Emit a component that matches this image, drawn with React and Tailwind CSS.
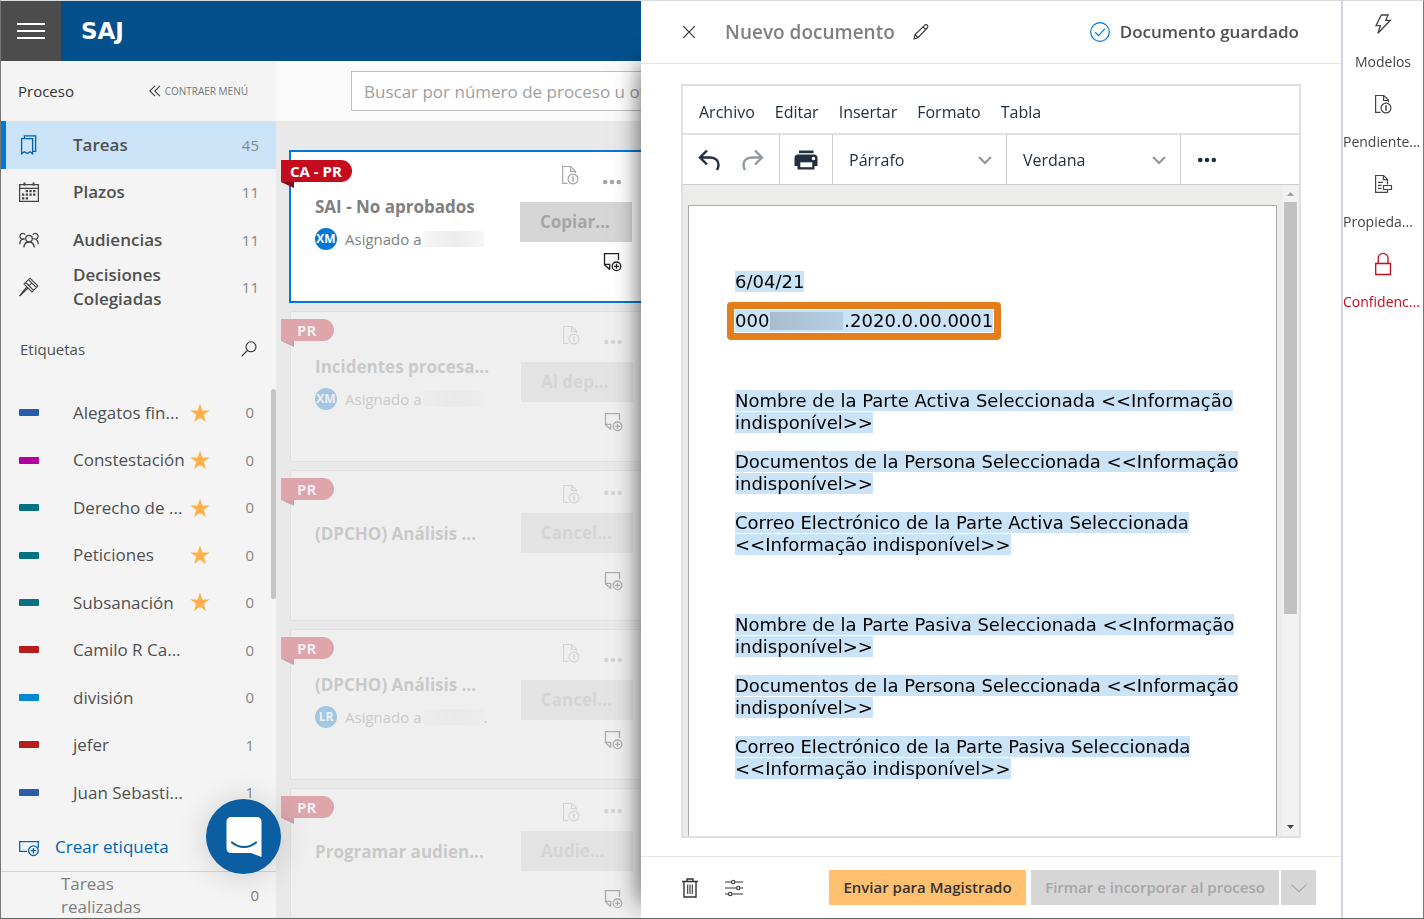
import clsx from "clsx";

const tasks = [
  { id: "tareas", label: "Tareas", count: 45, icon: BookmarkIcon, active: true },
  { id: "plazos", label: "Plazos", count: 11, icon: CalendarIcon },
  { id: "audiencias", label: "Audiencias", count: 11, icon: PeopleIcon },
  { id: "decisiones", label: "Decisiones Colegiadas", count: 11, icon: GavelIcon },
];

const tags = [
  { label: "Alegatos fin...", color: "bg-[#2b5bab]", star: true, count: 0 },
  { label: "Constestación", color: "bg-[#b4009e]", star: true, count: 0 },
  { label: "Derecho de ...", color: "bg-[#057183]", star: true, count: 0 },
  { label: "Peticiones", color: "bg-[#057183]", star: true, count: 0 },
  { label: "Subsanación", color: "bg-[#057183]", star: true, count: 0 },
  { label: "Camilo R Ca...", color: "bg-[#b81c1c]", count: 0 },
  { label: "división", color: "bg-[#0288d1]", count: 0 },
  { label: "jefer", color: "bg-[#b81c1c]", count: 1 },
  { label: "Juan Sebasti...", color: "bg-[#2b5bab]", count: 1 },
];

const cards = [
  { badge: "CA - PR", title: "SAI - No aprobados", user: "XM", action: "Copiar...", active: true },
  { badge: "PR", title: "Incidentes procesa...", user: "XM", action: "Al dep..." },
  { badge: "PR", title: "(DPCHO) Análisis ...", action: "Cancel..." },
  { badge: "PR", title: "(DPCHO) Análisis ...", user: "LR", action: "Cancel...", dot: true },
  { badge: "PR", title: "Programar audien...", action: "Audie..." },
];

const menus = ["Archivo", "Editar", "Insertar", "Formato", "Tabla"];

const paragraphs = [
  "Nombre de la Parte Activa Seleccionada <<Informação indisponível>>",
  "Documentos de la Persona Seleccionada <<Informação indisponível>>",
  "Correo Electrónico de la Parte Activa Seleccionada <<Informação indisponível>>",
  "",
  "Nombre de la Parte Pasiva Seleccionada <<Informação indisponível>>",
  "Documentos de la Persona Seleccionada <<Informação indisponível>>",
  "Correo Electrónico de la Parte Pasiva Seleccionada <<Informação indisponível>>",
];

const rail = [
  { label: "Modelos", icon: BoltIcon },
  { label: "Pendiente...", icon: DocAlertIcon, clipped: true },
  { label: "Propieda...", icon: DocPropsIcon, clipped: true },
  { label: "Confidenc...", icon: LockIcon, clipped: true, danger: true },
];

/* ---------- Icons ---------- */

function Svg({ className = "size-5", box = "0 0 20 20", width = 1.1, children }) {
  return (
    <svg
      className={clsx("shrink-0", className)}
      viewBox={box}
      fill="none"
      stroke="currentColor"
      strokeWidth={width}
      aria-hidden="true"
    >
      {children}
    </svg>
  );
}

function BookmarkIcon() {
  return (
    <Svg width={1.3}>
      <path d="M2.6 3.6h11v15.2l-2.7-2-2.8 1.7-2.8-1.7-2.7 2z" />
      <path d="M5.4 3.4V.8h11.2v15.5h-2.8" />
    </Svg>
  );
}

function CalendarIcon() {
  return (
    <Svg width={1.3}>
      <path d="M.6 2.6h18.8v16.8H.6zM.6 6.4h18.8" />
      <path strokeWidth="2" d="M5.5.4v3.2M14.5.4v3.2" />
      <path
        strokeWidth="2.2"
        strokeDasharray="2.3 1.4"
        d="M6.7 9.2h10.6M3 12.7h14.3M3 16.3h6"
      />
    </Svg>
  );
}

function PeopleIcon() {
  return (
    <Svg width={1.3}>
      <circle cx="10" cy="8.6" r="3.3" />
      <path d="M4.8 17.4c.3-3.2 2.4-5.4 5.2-5.4s4.9 2.2 5.2 5.4" />
      <path d="M6.2 4.6a2.9 2.9 0 1 0-3.6 4.3M5.8 8.7C3 8.7.9 10.7.7 14.3M2.5 8.9c.9.6 2 .6 3 .2M13.8 4.6a2.9 2.9 0 1 1 3.6 4.3M14.2 8.7c2.8 0 4.9 2 5.1 5.6" />
    </Svg>
  );
}

function GavelIcon() {
  return (
    <Svg>
      <path d="M11 1.2 18.9 9.1 13 15 5.1 7.1zM9.5 2.7l7.9 7.9M6.7 5.5l7.9 7.900M12.800 5.900 9.900 8.800" />
      <path d="M7.8 9.8.5 18.9M8.9 11 .8 19.2" />
    </Svg>
  );
}

function SearchIcon() {
  return (
    <Svg className="size-4" box="0 0 16 16">
      <circle cx="10" cy="5.8" r="5" />
      <path d="M6.4 9.5.6 15.3" />
    </Svg>
  );
}

function StarIcon() {
  return (
    <svg className="size-5 shrink-0" viewBox="0 0 20 20" fill="#ffb04a" aria-hidden="true">
      <path d="M10 .5l2.350 6.900h7.150l-5.700 4.400 2.100 7.200L10 14.800 4.100 19l2.100-7.200L.5 7.400h7.150z" />
    </svg>
  );
}

function TagAddIcon() {
  return (
    <Svg width={1.3}>
      <path d="M8 14.3H.7V4.7h18.6v6" />
      <circle cx="14.4" cy="13.7" r="4.8" />
      <path d="M14.4 11v5.4M11.7 13.7h5.4" />
    </Svg>
  );
}

function DocAlertIcon() {
  return (
    <Svg width={1.2}>
      <path d="M7.5 18.4H2.6V1.5h8.2l4.7 4.7v2M10.6 1.5v5h5" />
      <circle cx="13" cy="14" r="4.9" />
      <path strokeWidth="1.5" d="M13 11.2v5.6" />
    </Svg>
  );
}

function DocPropsIcon() {
  return (
    <Svg width={1.2}>
      <path d="M14.5 18.4H2.6V1.5h8l3.9 3.9v5.2M10.4 1.5v4.1h4.1M5 8.3h5M5 11.3h3.5M5 14.3h3.5" />
      <path d="M10.5 11.5h8v4h-8zM14.5 15.5v2.9" />
    </Svg>
  );
}

function BoltIcon() {
  return (
    <Svg width={1.3}>
      <path d="M8.3 1h6.9l-2.5 5.3h4.7L4.900 19.300l2.500-7.600H3z" />
    </Svg>
  );
}

function LockIcon() {
  return (
    <Svg className="h-6 w-5" box="0 0 20 24" width={1.3}>
      <path d="M2.7 11.5h14.8v11H2.7zM5.200 11.500V6.300a4.900 4.900 0 0 1 9.800 0v5.200" />
    </Svg>
  );
}

function NoteAddIcon() {
  return (
    <Svg width={1.3}>
      <path d="M16.5 8V1.6h-14v11.2l4.7 4.3h.5v-4.7H2.7" />
      <circle cx="14.5" cy="14.3" r="4.3" />
      <path d="M14.5 11.8v5M12 14.3h5" />
    </Svg>
  );
}

function DotsIcon({ className = "h-4 w-5" }) {
  return (
    <svg className={className} viewBox="0 0 20 16" fill="currentColor" aria-hidden="true">
      <circle cx="3.2" cy="8" r="2.3" />
      <circle cx="10" cy="8" r="2.3" />
      <circle cx="16.8" cy="8" r="2.3" />
    </svg>
  );
}

function Chevron({ className }) {
  return (
    <Svg className={className} box="0 0 14 14" width={2}>
      <path d="M1 4l6 6 6-6" />
    </Svg>
  );
}

/* ---------- Left menu ---------- */

function Sidebar() {
  return (
    <aside className="flex w-[275px] shrink-0 flex-col bg-[#f4f4f4] text-[#505050]">
      <div className="flex h-[60px] shrink-0 items-center justify-between pr-7 pl-[17px]">
        <h2 className="text-[15px] text-[#333]">Proceso</h2>
        <button className="flex items-center gap-1 text-[10px] font-medium text-[#777]">
          <Svg className="size-3 text-[#444]" box="0 0 12 12">
            <path d="M6 .8.8 6 6 11.2M11 .8 5.8 6 11 11.2" />
          </Svg>
          CONTRAER MENÚ
        </button>
      </div>

      <nav className="grid h-[190px] shrink-0 auto-rows-fr">
        {tasks.map(({ id, label, count, icon: Icon, active }) => (
          <a
            key={id}
            href={`#${id}`}
            className={clsx(
              "flex items-center pr-[17px]",
              active ? "border-l-[5px] border-[#0078d7] bg-[#cbe3f7] pl-[13px]" : "pl-[18px]"
            )}
          >
            <span className={active ? "text-[#0063b1]" : "text-[#444]"}>
              <Icon />
            </span>
            <span className="ml-[34px] w-32 text-[17px] leading-6 font-semibold">{label}</span>
            <span className="ml-auto text-[15px] text-[#858585]">{count}</span>
          </a>
        ))}
      </nav>

      <div className="flex h-[78px] shrink-0 items-center justify-between pr-[19px] pb-0.5 pl-[19px]">
        <h2 className="text-[15px] font-medium">Etiquetas</h2>
        <button aria-label="Buscar etiqueta" className="text-[#333]">
          <SearchIcon />
        </button>
      </div>

      <div className="relative min-h-0 flex-1">
        <ul className="grid h-full auto-rows-fr">
          {tags.map((tag) => (
            <li key={tag.label} className="flex items-center pr-[22px] pl-[18px]">
              <span className={clsx("h-[7px] w-5 rounded-[1px]", tag.color)} />
              <span className="ml-[34px] w-[117px] text-[17px] whitespace-nowrap">{tag.label}</span>
              {tag.star && <StarIcon />}
              <span className="ml-auto text-[15px] text-[#858585]">{tag.count}</span>
            </li>
          ))}
        </ul>
        <span className="absolute top-0 right-0 h-[210px] w-[5px] rounded-sm bg-[#c5c5c5]" />
      </div>

      <button className="flex h-14 shrink-0 items-center gap-4 border-b border-[#d6d6d6] pt-1.5 pl-[18px] text-[17px] text-[#0063b1]">
        <TagAddIcon />
        Crear etiqueta
      </button>
      <a href="#realizadas" className="flex shrink-0 items-center pr-[17px] pl-[60px] text-[#808080]">
        <span className="w-[100px] text-[17px] leading-[23px]">Tareas realizadas</span>
        <span className="ml-auto text-[15px]">0</span>
      </a>
    </aside>
  );
}

/* ---------- Task list ---------- */

function TaskCard({ badge, title, user, action, active, dot }) {
  return (
    <li
      className={clsx(
        "relative flex shrink-0 justify-between bg-white pr-6",
        active
          ? "h-[153px] border-2 border-[#0078d7] pl-6"
          : "ml-px h-[151px] border border-[#ccc] pl-6 opacity-30"
      )}
    >
      <div
        className={clsx(
          "absolute -left-[10px] flex h-[22px] items-center rounded-r-full bg-[#c50b1e] text-[15px] font-bold text-white",
          active ? "top-2 pr-[10px] pl-[9px]" : "top-[7px] pr-[18px] pl-4"
        )}
      >
        {badge}
        <svg className="absolute top-full left-0 h-1.5 w-[13px]" viewBox="0 0 13 6" aria-hidden="true">
          <path d="M0 0h13v6z" fill="#8f0612" />
        </svg>
      </div>

      <div className={user ? "pt-[43px]" : "pt-[51px]"}>
        <h3 className="text-[17px] leading-6 font-bold whitespace-nowrap text-[#808080]">{title}</h3>
        {user && (
          <div className="mt-2 flex items-center text-[15px] leading-6 text-[#808080]">
            <span className="flex size-[22px] items-center justify-center rounded-full bg-[#0078d7] text-[12px] font-bold text-white">
              {user}
            </span>
            <span className="ml-2 whitespace-nowrap">Asignado a</span>
            <span className="ml-0.5 h-4 w-[60px] bg-linear-to-r from-[#f6f6f6] via-[#ececec] to-[#f6f6f6]" />
            {dot && "."}
          </div>
        )}
      </div>

      <div className="w-28 text-[#a6a6a6]">
        <div className={clsx("flex justify-between pt-[13px] pr-2.5 pl-10", user ? "h-[50px]" : "h-[42px]")}>
          <DocAlertIcon />
          <button aria-label="Más opciones" className="mb-3 self-end">
            <DotsIcon />
          </button>
        </div>
        <button className="block h-10 w-full bg-[#d6d6d6] pl-5 text-left text-[17px] font-bold">
          {action}
        </button>
        <button
          aria-label="Agregar nota"
          className={clsx("ml-auto block pr-2.5 text-[#1f1f1f]", user ? "mt-2.5" : "mt-[18px]")}
        >
          <NoteAddIcon />
        </button>
      </div>
    </li>
  );
}

function TaskList() {
  return (
    <main className="flex min-w-0 flex-1 flex-col bg-[#e9e9e9]">
      <div className="flex h-[60px] shrink-0 items-center bg-[#fafafa] pl-[75px]">
        <input
          type="search"
          aria-label="Buscar"
          placeholder="Buscar por número de proceso u otros datos"
          className="h-10 w-[480px] border border-[#bfbfbf] bg-white px-3 text-[17px] placeholder:text-[#a0a0a0]"
        />
      </div>
      <ul className="flex min-h-0 w-[382px] flex-1 flex-col gap-2 overflow-hidden pt-[29px] pl-[13px]">
        {cards.map((card, i) => (
          <TaskCard key={i} {...card} />
        ))}
      </ul>
    </main>
  );
}

/* ---------- Editor ---------- */

function ToolbarSelect({ label, value }) {
  return (
    <div className="relative flex w-[174px] items-center border-r border-[#ccc]">
      <select
        aria-label={label}
        defaultValue={value}
        className="h-full w-full appearance-none bg-transparent px-4 text-[16px]"
      >
        <option>{value}</option>
      </select>
      <Chevron className="pointer-events-none absolute right-3.5 size-3.5 text-[#8f969e]" />
    </div>
  );
}

function Editor() {
  return (
    <div className="flex min-h-0 flex-1 flex-col border-2 border-[#e0e0e3] text-[#222f3e]">
      <div className="flex h-[49px] shrink-0 items-center gap-5 border-b-2 border-[#e0e0e3] px-4 pt-1 text-[16px]">
        {menus.map((menu) => (
          <button key={menu}>{menu}</button>
        ))}
      </div>
      <div className="flex h-[50px] shrink-0 border-b border-[#ccc]">
        <div className="flex w-[97px] items-center justify-between border-r border-[#ccc] px-3.5">
          <button aria-label="Deshacer">
            <Svg className="size-6" box="0 0 24 24" width={2.4}>
              <path d="M10 2.5 3 9.5l7 7M3 9.5h10.5c5 0 8 3.5 8 7 0 2.200-.7 4-1.500 5.500" />
            </Svg>
          </button>
          <button aria-label="Rehacer" className="text-[#9199a1]">
            <Svg className="size-6" box="0 0 24 24" width={2.4}>
              <path d="M14 2.5l7 7-7 7M21 9.5H10.5c-5 0-8 3.5-8 7 0 2.200.7 4 1.500 5.500" />
            </Svg>
          </button>
        </div>
        <button aria-label="Imprimir" className="flex w-[53px] items-center justify-center border-r border-[#ccc]">
          <svg className="size-6" viewBox="0 0 24 24" aria-hidden="true">
            <path d="M5 2.5h14.5v2.700H5z" fill="currentColor" />
            <path
              d="M4 6.5h16a3.500 3.500 0 0 1 3.500 3.500v8h-3v3.500h-17V18h-3v-8A3.500 3.500 0 0 1 4 6.500z"
              fill="currentColor"
            />
            <path d="M6.300 14.300h12v4.900h-12z" fill="#fff" />
            <circle cx="19.5" cy="10.5" r="1.7" fill="#fff" />
          </svg>
        </button>
        <ToolbarSelect label="Estilo" value="Párrafo" />
        <ToolbarSelect label="Fuente" value="Verdana" />
        <button aria-label="Más" className="px-4">
          <DotsIcon />
        </button>
      </div>

      <div className="flex min-h-0 flex-1 bg-[#ececea]">
        <article className="mt-5 mr-[5px] ml-[5px] flex-1 overflow-hidden border border-b-0 border-[#aaa] bg-white pt-[65px] pr-9 pl-[46px] font-['DejaVu_Sans',sans-serif] text-[18px] leading-[22px] text-black">
          <p className="mb-[17px]">
            <span className="bg-[#cbe3f7]">6/04/21</span>
          </p>
          <p className="mb-[17px] flex">
            <span className="relative flex bg-[#cbe3f7] before:absolute before:-inset-2 before:rounded-[4px] before:border-[7px] before:border-[#e47e1c]">
              000
              <span className="mx-px my-0.5 w-[73px] bg-linear-to-r from-[#a9bccb] to-[#b5cfe4]" />
              .2020.0.00.0001
            </span>
          </p>
          <p className="mb-[17px] h-6" />
          {paragraphs.map((text, i) => (
            <p key={i} className={clsx("mb-[17px]", !text && "h-6")}>
              <span className="bg-[#cbe3f7]">{text}</span>
            </p>
          ))}
        </article>
        <div className="flex w-[17px] flex-col items-center justify-between bg-[#f1f1f1] py-[7px]">
          <svg className="h-1 w-[7px]" viewBox="0 0 7 4" aria-hidden="true">
            <path d="M0 4 3.5 0 7 4z" fill="#a0a0a0" />
          </svg>
          <span className="mt-1.5 mb-auto h-[412px] w-[13px] bg-[#c1c1c1]" />
          <svg className="h-1 w-[7px]" viewBox="0 0 7 4" aria-hidden="true">
            <path d="M0 0h7L3.5 4z" fill="#444" />
          </svg>
        </div>
      </div>
    </div>
  );
}

function DocumentDrawer() {
  return (
    <section className="absolute inset-y-0 right-0 z-10 flex w-[782px] bg-white shadow-[-40px_25px_24px_-40px_rgba(0,0,0,0.65)]">
      <div className="flex min-w-0 flex-1 flex-col">
        <header className="flex h-[63px] shrink-0 items-center border-b border-[#e6e6e6] pr-[42px] pl-[41px]">
          <button aria-label="Cerrar">
            <Svg className="size-3.5 text-[#333]" box="0 0 14 14" width={1.2}>
              <path d="M1.2 1.2l11.6 11.6M12.8 1.2 1.2 12.8" />
            </Svg>
          </button>
          <h1 className="ml-[29px] text-[19px] font-semibold text-[#808080]">Nuevo documento</h1>
          <button aria-label="Editar nombre" className="ml-[18px] text-[#333]">
            <Svg className="size-4" box="0 0 16 16">
              <path d="M1 15l1.1-4.400L11.600 1.300c.8-.8 2-.8 2.700-.1s.8 2-.1 2.800L4.900 13.700zM10.100 2.800l2.900 2.900M2.100 10.600l2.800 3.100" />
            </Svg>
          </button>
          <p className="ml-auto flex items-center gap-2.5 text-[17px] font-semibold text-[#505050]">
            <Svg className="size-5 text-[#0078d7]" width={1.2}>
              <circle cx="10" cy="10" r="9.3" />
              <path d="M5.2 10.3l3.4 3.3 6.4-7" />
            </Svg>
            Documento guardado
          </p>
        </header>

        <div className="flex min-h-0 flex-1 flex-col pt-5 pr-10 pb-[18px] pl-10">
          <Editor />
        </div>

        <footer className="flex h-[62px] shrink-0 items-center border-t border-[#e6e6e6] pr-[25px] pl-10 text-[15px] font-semibold">
          <button aria-label="Eliminar" className="text-[#333]">
            <Svg className="h-5 w-[18px]" box="0 0 18 20" width={1.4}>
              <path d="M1 3.5h16M6 3.5V1h6v2.500M3 3.500V19h12V3.500" />
              <path strokeWidth="1.1" d="M6.700 6.500v9.500M9 6.500v9.500M11.300 6.500v9.500" />
            </Svg>
          </button>
          <button aria-label="Opciones" className="ml-[26px] text-[#333]">
            <Svg className="size-[18px]" box="0 0 18 18">
              <path d="M0 3h6.300M10 3h8M0 9h11.500M15.200 9H18M0 15h3.300M7 15h11" />
              <circle cx="8.2" cy="3" r="1.7" />
              <circle cx="13.3" cy="9" r="1.7" />
              <circle cx="5.2" cy="15" r="1.7" />
            </Svg>
          </button>
          <button className="ml-auto h-[35px] w-[197px] bg-[#ffc06f] text-[#333]">Enviar para Magistrado</button>
          <button disabled className="ml-[5px] h-[35px] w-[248px] bg-[#d6d6d6] text-[#a6a6a6]">
            Firmar e incorporar al proceso
          </button>
          <button
            disabled
            aria-label="Más acciones"
            className="ml-0.5 flex size-[35px] items-center justify-center bg-[#d6d6d6] text-[#a6a6a6]"
          >
            <Svg className="size-4" box="0 0 14 14" width={1}>
              <path d="M.5 4 7 10.3 13.5 4" />
            </Svg>
          </button>
        </footer>
      </div>

      <nav className="w-[82px] shrink-0 border-l-2 border-[#d5d3e0]">
        {rail.map(({ label, icon: Icon, danger, clipped }) => (
          <button
            key={label}
            className={clsx(
              "flex h-20 w-full flex-col items-center text-[14px]",
              danger ? "text-[#c50b1e]" : "text-[#444]"
            )}
          >
            <span className="flex h-[46px] items-center">
              <Icon />
            </span>
            <span className={clsx("w-full leading-[30px] whitespace-nowrap", clipped && "text-left")}>
              {label}
            </span>
          </button>
        ))}
      </nav>
    </section>
  );
}

export default function App() {
  return (
    <div className="relative flex h-screen flex-col overflow-hidden border border-t-[#d8dde0] border-r-[#777] border-b-[#666] border-l-[#777] font-['Open_Sans',sans-serif]">
      <header className="relative flex h-[60px] shrink-0 items-center bg-[#04508c] text-white">
        <button aria-label="Menú" className="flex h-full w-[60px] items-center justify-center bg-[#4c4c4c]">
          <Svg className="h-4 w-7" box="0 0 28 16" width={2}>
            <path d="M0 1h28M0 8h28M0 15h28" />
          </Svg>
        </button>
        <span className="ml-5 font-['DejaVu_Sans',sans-serif] text-[23px] font-bold">SAJ</span>
      </header>

      <div className="flex min-h-0 flex-1">
        <Sidebar />
        <TaskList />
      </div>

      <DocumentDrawer />

      <button
        aria-label="Abrir chat"
        className="absolute bottom-11 left-[205px] z-20 flex size-[75px] items-center justify-center rounded-full bg-[#0b5ea2] shadow-[0_2px_32px_rgba(0,0,0,0.16)]"
      >
        <svg className="h-10 w-9" viewBox="0 0 36 40" aria-hidden="true">
          <path d="M5 0h26a4.500 4.500 0 0 1 4.500 4.500V40L25 36H5a4.500 4.500 0 0 1-4.500-4.500v-27A4.500 4.500 0 0 1 5 0z" fill="#fff" />
          <path d="M6 25.500c7 6 17 6 24 0" fill="none" stroke="#0b5ea2" strokeWidth="2.2" strokeLinecap="round" />
        </svg>
      </button>
    </div>
  );
}
